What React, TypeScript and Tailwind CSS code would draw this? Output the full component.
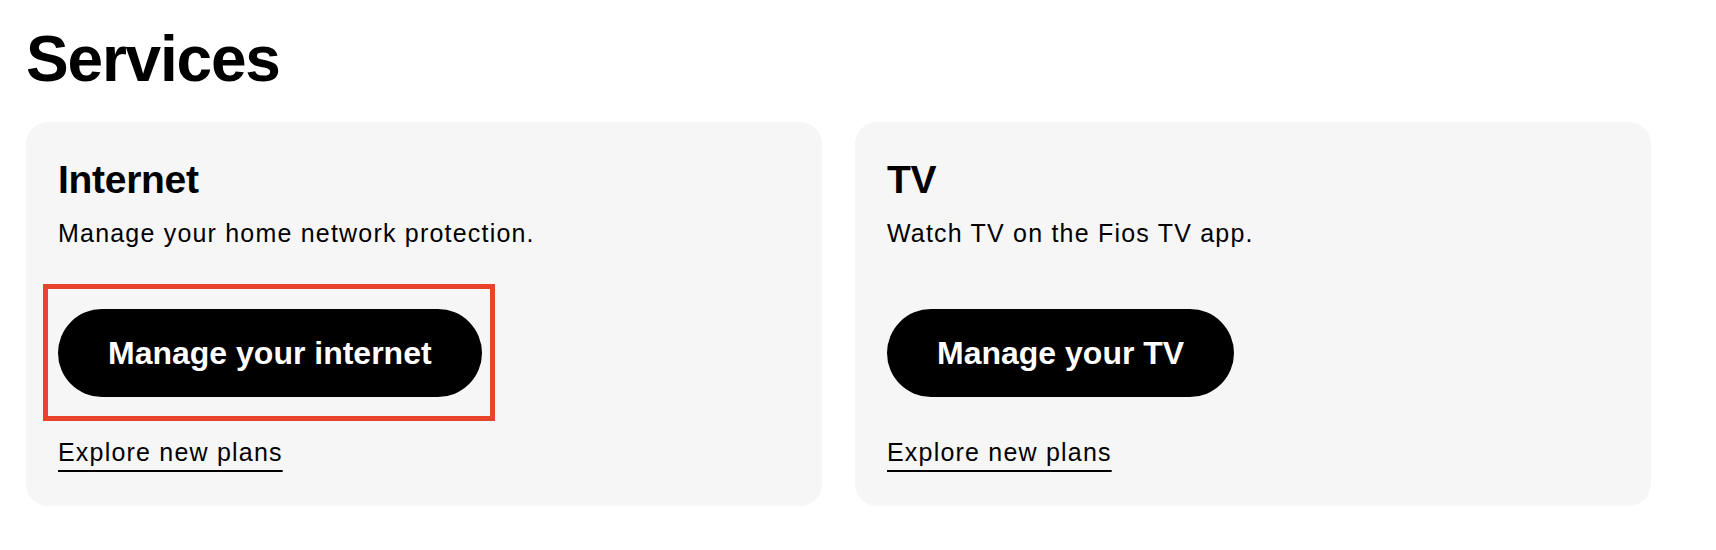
const SERVICES = [
  {
    title: "Internet",
    blurb: "Manage your home network protection.",
    cta: "Manage your internet",
    highlighted: true,
  },
  {
    title: "TV",
    blurb: "Watch TV on the Fios TV app.",
    cta: "Manage your TV",
    highlighted: false,
  },
];

function ServiceCard({
  title,
  blurb,
  cta,
  highlighted,
}: {
  title: string;
  blurb: string;
  cta: string;
  highlighted: boolean;
}) {
  return (
    <div className="flex w-[796px] flex-col items-start rounded-[22px] bg-[#f6f6f6] px-[32px] pt-[39px] pb-[39px]">
      <h3 className="text-[39px] leading-[38px] font-bold tracking-[-0.3px] text-black">{title}</h3>
      <p className="mt-[16px] text-[25px] leading-[36px] tracking-[1.2px] text-black">{blurb}</p>
      <div className="relative mt-[58px]">
        <button
          type="button"
          className="flex h-[88px] items-center rounded-full bg-black px-[50px] text-[32px] leading-none font-bold text-white"
        >
          {cta}
        </button>
        {highlighted && (
          // annotation box drawn over the button
          <div className="pointer-events-none absolute -top-[25px] -right-[13px] -bottom-[24px] -left-[15px] border-[5px] border-[#e9432b]" />
        )}
      </div>
      <a
        href="#"
        className="mt-[40px] text-[25px] leading-[30px] tracking-[1.2px] text-black underline decoration-2 underline-offset-[9px]"
      >
        Explore new plans
      </a>
    </div>
  );
}

export default function App() {
  return (
    <div className="min-h-[550px] w-full bg-white pt-[27px] pl-[26px] font-['Liberation_Sans',Arial,sans-serif]">
      <h2 className="text-[64px] leading-[64px] font-bold tracking-[-1.2px] text-black">Services</h2>
      <div className="mt-[31px] flex gap-[33px]">
        {SERVICES.map((s) => (
          <ServiceCard key={s.title} {...s} />
        ))}
      </div>
    </div>
  );
}
